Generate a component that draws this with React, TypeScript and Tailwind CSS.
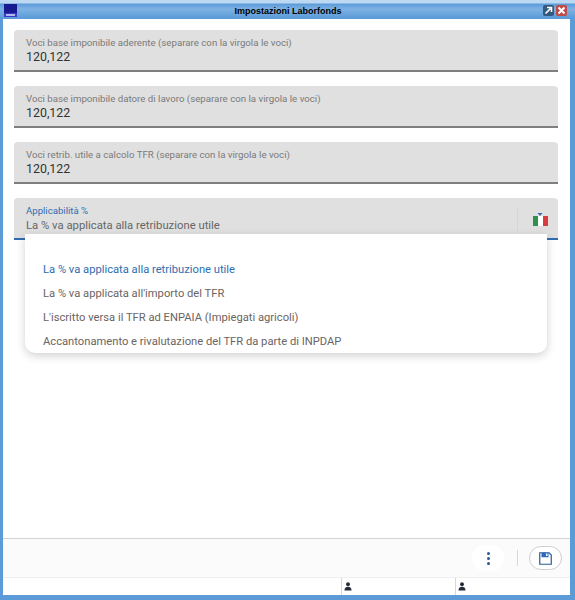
import React from 'react';

const FONT = "font-['Roboto',sans-serif]";

const fields = [
  'Voci base imponibile aderente (separare con la virgola le voci)',
  'Voci base imponibile datore di lavoro (separare con la virgola le voci)',
  'Voci retrib. utile a calcolo TFR (separare con la virgola le voci)',
];

const options = [
  "La % va applicata all'importo del TFR",
  "L'iscritto versa il TFR ad ENPAIA (Impiegati agricoli)",
  'Accantonamento e rivalutazione del TFR da parte di INPDAP',
];

const Person = () => (
  <svg width="8" height="9" viewBox="0 0 9 10" className="ml-[1px] -mt-[1px]">
    <circle cx="4.5" cy="2.5" r="2.2" fill="#222b3a" />
    <path d="M0.5 9.5 C0.5 6.5 2.5 5.4 4.5 5.4 C6.5 5.4 8.5 6.5 8.5 9.5 Z" fill="#222b3a" />
  </svg>
);

const App: React.FC = () => {
  return (
    <div className={`w-[575px] h-[600px] flex flex-col bg-[#5b9bd8] overflow-hidden ${FONT}`}>
      {/* Title bar */}
      <div className="h-[19px] shrink-0 flex items-center relative bg-[linear-gradient(#bcd8f2_0px,#bcd8f2_3px,#5b9bd8_4px,#7fb2e4_9px,#5b9bd8_18px)]">
        <svg width="13" height="13" viewBox="0 0 13 13" className="ml-[4px] mt-[2px]">
          <rect width="13" height="13" fill="#1a1a90" />
          <rect y="9" width="13" height="4" fill="#3a3ac8" />
          <rect x="2" y="10" width="9" height="2" fill="#b0b8ec" />
        </svg>
        <span className="flex-1 text-center text-[9px] leading-[12px] mt-[3px] font-bold text-black font-['Liberation_Sans',sans-serif] pl-[16px]">
          Impostazioni Laborfonds
        </span>
        <div className="flex gap-[2px] mr-[8px] mt-[2px]">
          <div className="w-[11px] h-[11px] rounded-[2px] bg-[#33597f] flex items-center justify-center">
            <svg width="9" height="9" viewBox="0 0 9 9">
              <path d="M1.5 7.5 L6.5 2.5 M3 1.5 H7.5 V6" stroke="#fff" strokeWidth="1.6" fill="none" />
            </svg>
          </div>
          <div className="w-[11px] h-[11px] rounded-[2px] bg-[#c04a45] flex items-center justify-center">
            <svg width="9" height="9" viewBox="0 0 9 9">
              <path d="M1.5 1.5 L7.5 7.5 M7.5 1.5 L1.5 7.5" stroke="#fff" strokeWidth="2" fill="none" />
            </svg>
          </div>
        </div>
      </div>

      {/* Window body */}
      <div className="flex-1 ml-[3px] mr-[5px] mb-[5px] bg-white flex flex-col min-h-0">
        <div className="flex-1 relative pt-[11px] pl-[11px] pr-[12px] flex flex-col gap-[14px]">
          {fields.map(label => (
            <div key={label} className="h-[42px] bg-[#e0e0e0] rounded-t-[4px] border-b-2 border-[#7f7f7f] pl-[12px] pt-[7px]">
              <div className="text-[9.7px] leading-[12px] text-[#7a7a7a]">{label}</div>
              <div className="text-[12.4px] leading-[16px] text-[#333]">120,122</div>
            </div>
          ))}

          <div className="h-[42px] bg-[#e0e0e0] rounded-t-[4px] border-b-2 border-[#2f6db0] pl-[12px] pt-[7px] flex">
            <div className="flex-1">
              <div className="text-[9.6px] leading-[12px] text-[#2f6db0]">Applicabilità %</div>
              <div className="text-[11.3px] leading-[18px] text-[#666]">La % va applicata alla retribuzione utile</div>
            </div>
            <div className="w-[41px] h-[24px] mt-[2px] border-l border-[#d6d6d6] flex flex-col items-center pt-[6px]">
              <svg width="15" height="15" viewBox="0 0 15 15" className="ml-[4px]">
                <path d="M4.5 0 H9.5 L7 3 Z" fill="#2f6db0" />
                <rect y="3" width="5" height="10" fill="#2e9150" />
                <rect x="5" y="3" width="5" height="10" fill="#fff" />
                <rect x="10" y="3" width="5" height="10" fill="#db3a3f" />
              </svg>
            </div>
          </div>

          {/* Open dropdown */}
          <div className="absolute left-[22px] top-[215px] w-[522px] h-[119px] bg-white rounded-b-[10px] shadow-[0_3px_10px_rgba(0,0,0,0.18)] pt-[24px] pl-[18px] text-[11.2px]">
            <div className="h-[24px] leading-[24px] text-[#2f6db0]">La % va applicata alla retribuzione utile</div>
            {options.map(opt => (
              <div key={opt} className="h-[24px] leading-[24px] text-[#6b6462]">{opt}</div>
            ))}
          </div>
        </div>

        {/* Action bar */}
        <div className="h-[40px] shrink-0 bg-[#fbfbfb] border-t border-[#d4d4d4] border-b border-b-[#efefef] flex items-center justify-end pr-[8px]">
          <div className="w-[32px] h-[26px] rounded-full bg-white flex flex-col items-center justify-center gap-[2px] mr-[13px]">
            <span className="w-[3px] h-[3px] rounded-full bg-[#2a5a94]" />
            <span className="w-[3px] h-[3px] rounded-full bg-[#2a5a94]" />
            <span className="w-[3px] h-[3px] rounded-full bg-[#2a5a94]" />
          </div>
          <div className="w-px h-[16px] bg-[#d8d8d8] mr-[11px]" />
          <div className="w-[33px] h-[24px] rounded-full border border-[#cfcfcf] bg-white flex items-center justify-center">
            <svg width="13" height="13" viewBox="0 0 13 13">
              <path d="M0.75 0.75 H10 L12.25 3 V12.25 H0.75 Z" fill="#fff" stroke="#2a5a94" strokeWidth="1.2" />
              <rect x="2.5" y="0.75" width="7" height="4.5" fill="#2a6ac0" />
              <rect x="7" y="1.5" width="1.5" height="2.5" fill="#fff" />
            </svg>
          </div>
        </div>

        {/* Status bar */}
        <div className="h-[17px] shrink-0 bg-white flex text-[10px]">
          <div className="w-[339px] border-r border-[#d8d8d8]" />
          <div className="w-[114px] border-r border-[#d8d8d8] flex items-center pl-[1px]">
            <Person />
          </div>
          <div className="flex-1 flex items-center pl-[1px]">
            <Person />
          </div>
        </div>
      </div>
    </div>
  );
};

export default App;
